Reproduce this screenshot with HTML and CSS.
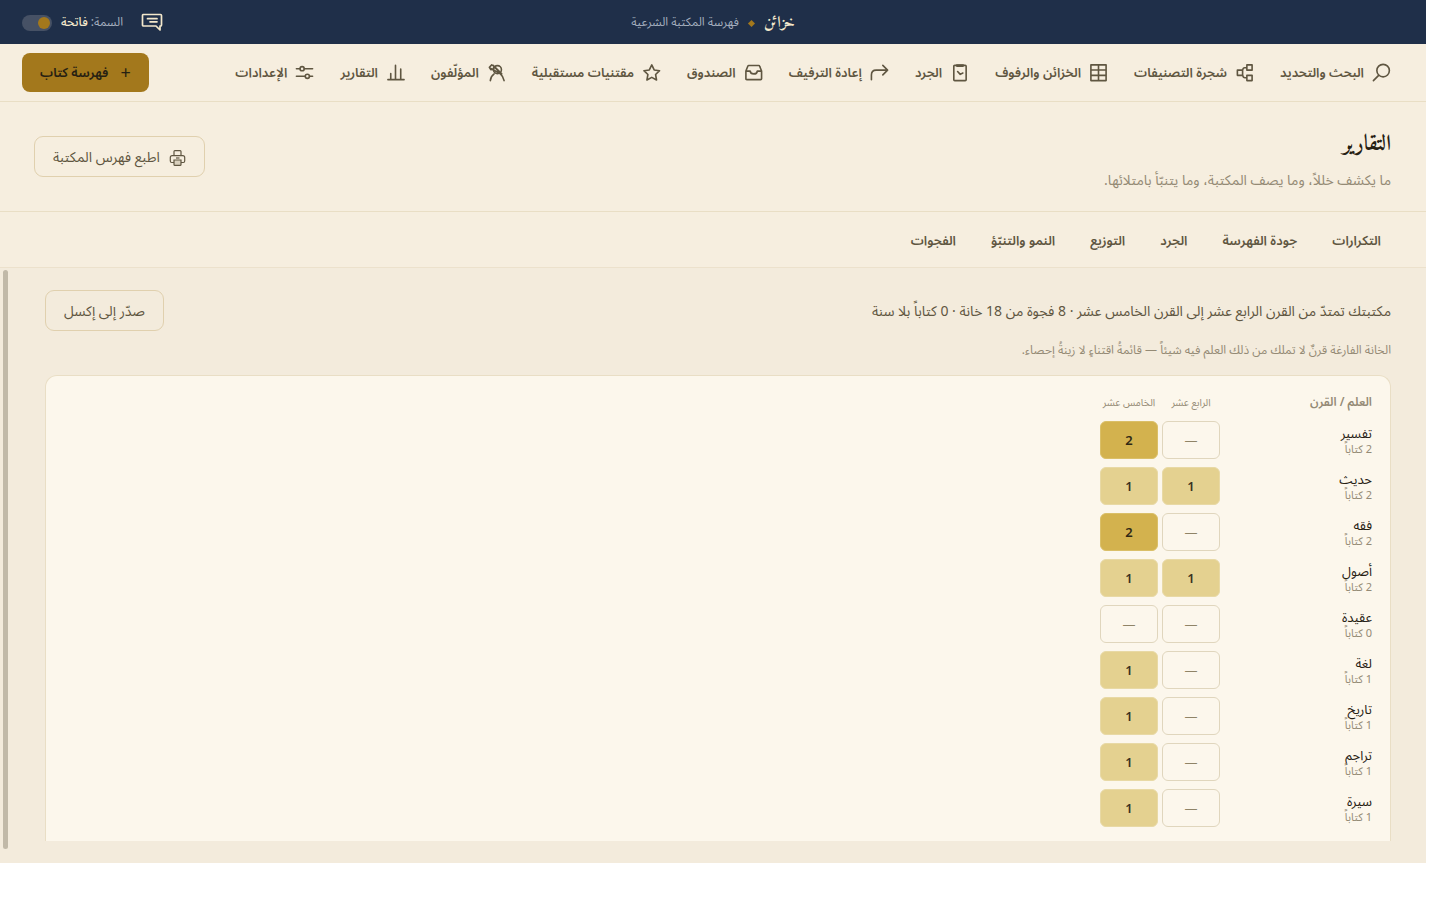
FILE: index.html
```html
<!DOCTYPE html>
<html lang="ar" dir="rtl">
<head>
<meta charset="utf-8">
<title>خزائن — التقارير</title>
<link rel="stylesheet" href="styles.css">
</head>
<body>
<div class="app">
  <header class="topbar">
    <div class="brand">
      <span class="brand-name">خزائن</span>
      <span class="brand-mark"></span>
      <span class="brand-sub">فهرسة المكتبة الشرعية</span>
    </div>
    <div class="topbar-tools">
      <button class="icon-button" type="button" aria-label="ملاحظات">
        <svg width="22" height="20" viewBox="0 0 22 20" fill="none" stroke="currentColor" stroke-width="1.7" stroke-linejoin="round" stroke-linecap="round"><path d="M2 1.500h17.500q1 0 1 1v9.500q0 1-1 1h-.5v4l-4-4H2.500q-1 0-1-1V2.500q0-1 1-1z"/><path d="M6.500 5.700H16M9 8.800h7"/></svg>
      </button>
      <label class="theme">
        <span class="theme-label">السمة: <b>فاتحة</b></span>
        <input class="switch" type="checkbox">
      </label>
    </div>
  </header>

  <nav class="mainnav">
    <div class="nav-links">
      <a href="#"><svg class="icon" viewBox="0 0 20 20"><circle cx="11.700" cy="8" r="6.600"/><path d="M7 13l-5.500 5.500"/></svg>البحث والتحديد</a>
      <a href="#"><svg class="icon" viewBox="0 0 20 20"><path d="M2.500 7.500h5.500v5.500H2.500zM12.500 2h5.500v5.500h-5.500zM12.500 13h5.500v5.500h-5.500zM12.500 5H10q-1.500 0-2 2.500M8 12.500q.5 3 2.500 3h2"/></svg>شجرة التصنيفات</a>
      <a href="#"><svg class="icon" viewBox="0 0 20 20"><path d="M2 2h16v16.500H2zM10 2v16.500M2 7.300h16M2 13h16"/></svg>الخزائن والرفوف</a>
      <a href="#"><svg class="icon" viewBox="0 0 20 20"><rect x="4" y="2.500" width="13" height="16" rx="1"/><path d="M7.500 2.700h6" stroke-width="3"/><path d="M8 9l2.800 3 2.700-1.500"/></svg>الجرد</a>
      <a href="#"><svg class="icon" viewBox="0 0 20 20"><path d="M1.500 17.500v-5q0-5 5-5h12M13.500 2.500l5 5-5 5"/></svg>إعادة الترفيف</a>
      <a href="#"><svg class="icon" viewBox="0 0 20 20"><path d="M2 8.500L4 3.500q.3-.8 1-.8h10.500q.8 0 1 .8L18.500 8.500v8q0 1-1 1H3q-1 0-1-1zM2 8.500h4.500q.3 3 3.800 3t3.700-3h4.500"/></svg>الصندوق</a>
      <a href="#"><svg class="icon" viewBox="0 0 20 20"><path d="M10.300 2l2.500 5.300 5.700.8-4.200 4 1 5.800-5-2.800-5.100 2.800 1-5.800-4.200-4 5.700-.8z"/></svg>مقتنيات مستقبلية</a>
      <a href="#"><svg class="icon" viewBox="0 0 20 20"><circle cx="11" cy="7" r="4.200"/><path d="M3.500 18.500q.5-4.500 4-7M18 18.500q-1-4.500-3.500-6.500M6.500 2.500l9 9M3.500 5.500l11 6M2.500 4.500L5 2l2.500 1.500-1 3-2.500.500zM8.500 5l5.500 5.500"/></svg>المؤلّفون</a>
      <a href="#"><svg class="icon" viewBox="0 0 20 20"><path d="M2 17.500h17M5 17V11M10 17V2.500M15.500 17V6.500"/></svg>التقارير</a>
      <a href="#"><svg class="icon" viewBox="0 0 20 20"><path d="M1.500 6h3.700M9.800 6h8.700M1.500 14h9.200M15.300 14h3.200"/><circle cx="7.500" cy="6" r="2.200"/><circle cx="13" cy="14" r="2.200"/></svg>الإعدادات</a>
    </div>
    <button class="primary" type="button"><span class="plus">+</span>فهرسة كتاب</button>
  </nav>

  <section class="pagehead">
    <div class="pagehead-text">
      <h1>التقارير</h1>
      <p class="lead">ما يكشف خللاً، وما يصف المكتبة، وما يتنبّأ بامتلائها.</p>
    </div>
    <button class="ghost" type="button"><svg class="printer" viewBox="0 0 16 16"><path d="M4.500 5.500v-4q0-.9.900-.9h5.200q.9 0 .9.900v4M4.500 12.500H2.200Q.8 12.500.8 11V7.500q0-1.900 1.900-1.900h10.600q1.900 0 1.900 1.900V11q0 1.500-1.400 1.500h-2.300"/><path class="fill" d="M4.500 10h7v4.500q0 .9-.9.900H5.400q-.9 0-.9-.9z"/><path d="M6.500 8h3.500"/></svg>اطبع فهرس المكتبة</button>
  </section>

  <nav class="tabs">
    <a href="#">التكرارات</a>
    <a href="#">جودة الفهرسة</a>
    <a href="#">الجرد</a>
    <a href="#">التوزيع</a>
    <a href="#">النمو والتنبّؤ</a>
    <a href="#">الفجوات</a>
  </nav>

  <main class="content">
    <div class="scrollthumb"></div>
    <div class="summary">
      <p>مكتبتك تمتدّ من القرن الرابع عشر إلى القرن الخامس عشر · 8 فجوة من 18 خانة · 0 كتاباً بلا سنة</p>
      <button class="ghost" type="button">صدّر إلى إكسل</button>
    </div>
    <p class="note">الخانة الفارغة قرنٌ لا تملك من ذلك العلم فيه شيئاً — قائمةُ اقتناءٍ لا زينةُ إحصاء.</p>
    <div class="card">
      <table class="matrix">
        <thead><tr><th class="corner" scope="col">العلم / القرن</th><th scope="col">الرابع عشر</th><th scope="col">الخامس عشر</th></tr></thead>
        <tbody>
          <tr><th scope="row">تفسير<small>2 كتاباً</small></th><td>—</td><td class="two">2</td></tr>
          <tr><th scope="row">حديث<small>2 كتاباً</small></th><td class="one">1</td><td class="one">1</td></tr>
          <tr><th scope="row">فقه<small>2 كتاباً</small></th><td>—</td><td class="two">2</td></tr>
          <tr><th scope="row">أصول<small>2 كتاباً</small></th><td class="one">1</td><td class="one">1</td></tr>
          <tr><th scope="row">عقيدة<small>0 كتاباً</small></th><td>—</td><td>—</td></tr>
          <tr><th scope="row">لغة<small>1 كتاباً</small></th><td>—</td><td class="one">1</td></tr>
          <tr><th scope="row">تاريخ<small>1 كتاباً</small></th><td>—</td><td class="one">1</td></tr>
          <tr><th scope="row">تراجم<small>1 كتاباً</small></th><td>—</td><td class="one">1</td></tr>
          <tr><th scope="row">سيرة<small>1 كتاباً</small></th><td>—</td><td class="one">1</td></tr>
        </tbody>
      </table>
    </div>
  </main>
</div>
</body>
</html>
```
FILE: styles.css
```css
* { box-sizing: border-box; }

body {
  margin: 0;
  background: #fff;
  color: #5f5641;
  font-family: "Noto Sans Arabic", "Noto Sans", sans-serif;
  font-size: 14px;
  line-height: 24px;
}

h1, p { margin: 0; }
a { color: inherit; text-decoration: none; }
button { font: inherit; color: inherit; cursor: pointer; }

.app {
  margin-right: 14px;
  background: #f6eedf;
}

.topbar {
  display: grid;
  grid-template-columns: 1fr auto 1fr;
  align-items: center;
  height: 44px;
  padding: 2px 22px 0;
  background: #1f2f49;
  color: #a3adbd;
  font-size: 12px;
}
.brand { grid-column: 2; display: flex; align-items: center; gap: 10px; }
.brand-name { font-family: Amiri, serif; font-weight: 700; font-size: 16px; color: #f3e8cc; }
.brand-mark { width: 5px; height: 5px; background: #a3781c; transform: rotate(45deg); }
.topbar-tools { display: flex; align-items: center; justify-content: flex-end; gap: 18px; }
.icon-button { display: flex; padding: 0; border: 0; background: none; color: #f3e8cc; }
.theme { display: flex; align-items: center; gap: 9px; }
.theme b { font-weight: 500; color: #f3e8cc; }
.switch {
  appearance: none;
  display: flex;
  align-items: center;
  width: 30px;
  height: 16px;
  margin: 0;
  padding: 2px;
  border-radius: 8px;
  background: #465165;
}
.switch::before { content: ""; width: 12px; height: 12px; border-radius: 50%; background: #a3781c; }

.mainnav {
  display: flex;
  align-items: center;
  justify-content: space-between;
  height: 58px;
  padding: 0 35px 0 22px;
  border-bottom: 1px solid #e9dec5;
}
.nav-links { display: flex; gap: 26px; font-size: 13px; font-weight: 600; white-space: nowrap; }
.nav-links a { display: flex; align-items: center; gap: 8px; }
.icon { width: 19px; height: 19px; fill: none; stroke: currentColor; stroke-width: 1.7; stroke-linejoin: round; stroke-linecap: round; }
.primary {
  display: flex;
  align-items: center;
  gap: 12px;
  height: 39px;
  padding: 0 18px;
  border: 0;
  border-radius: 8px;
  background: #a3781c;
  color: #262012;
  font-size: 13px;
  font-weight: 600;
  white-space: nowrap;
}
.plus { font-size: 18px; font-weight: 400; }

.pagehead {
  display: flex;
  align-items: center;
  justify-content: space-between;
  height: 110px;
  padding: 0 35px 0 34px;
  border-bottom: 1px solid #e9dec5;
}
.pagehead-text { padding-top: 4px; }
h1 { font-family: Amiri, serif; font-size: 22px; line-height: 40px; color: #262012; }
.lead { color: #948a75; margin-top: 4px; }
.ghost {
  display: flex;
  align-items: center;
  gap: 9px;
  height: 41px;
  padding: 2px 18px 0;
  border: 1px solid #e0d0ae;
  border-radius: 9px;
  background: none;
  font-size: 14px;
  white-space: nowrap;
}
.printer { width: 17px; height: 16px; fill: none; stroke: currentColor; stroke-width: 1.2; }
.printer .fill { fill: #d9d0bd; }

.tabs {
  display: flex;
  align-items: center;
  gap: 35px;
  height: 56px;
  padding: 2px 45px 0;
  border-bottom: 1px solid #ece1cc;
  font-size: 13px;
  font-weight: 600;
}

.content {
  position: relative;
  padding: 22px 35px 22px 45px;
  background: #f3ebdc;
}
.scrollthumb {
  position: absolute;
  left: 3px;
  top: 2px;
  bottom: 14px;
  width: 5px;
  border-radius: 3px;
  background: #c1b9a8;
}
.summary { display: flex; align-items: center; justify-content: space-between; }
.summary p { padding-top: 2px; }
.note { margin: 8px 0 12px; font-size: 12px; color: #948a75; }
.card {
  padding: 9px 14px 6px;
  border: 1px solid #e9dec5;
  border-bottom: 0;
  border-radius: 12px 12px 0 0;
  background: #fcf7ec;
}
.matrix { border-collapse: separate; border-spacing: 4px 8px; table-layout: fixed; width: 280px; }
.matrix th, .matrix td { padding: 0; }
.matrix thead th { height: 20px; font-size: 10px; line-height: 20px; font-weight: 400; color: #948a75; width: 58px; white-space: nowrap; }
.matrix thead .corner { width: 148px; font-size: 12px; font-weight: 600; text-align: right; }
.matrix tbody th { padding-top: 2px; text-align: right; font-weight: 400; font-size: 13px; line-height: 18px; color: #262012; }
.matrix small { display: block; font-size: 11px; line-height: 14px; font-weight: 400; color: #948a75; }
.matrix td { height: 38px; padding-top: 2px; border: 1px solid #e0d6bd; border-radius: 6px; text-align: center; font-size: 13px; color: #8f8467; }
.matrix td.one { border-color: #e8d9a5; background: #e4d190; color: #3a3223; font-weight: 600; }
.matrix td.two { border-color: #dabf68; background: #d3b24e; color: #2f2815; font-weight: 600; }
```
